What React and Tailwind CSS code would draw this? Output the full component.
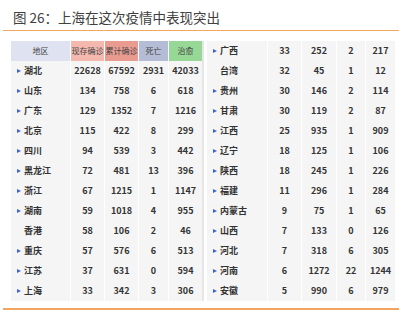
const LEFT = [
    ["湖北", 22628, 67592, 2931, 42033, true],
    ["山东", 134, 758, 6, 618, true],
    ["广东", 129, 1352, 7, 1216, true],
    ["北京", 115, 422, 8, 299, true],
    ["四川", 94, 539, 3, 442, true],
    ["黑龙江", 72, 481, 13, 396, true],
    ["浙江", 67, 1215, 1, 1147, true],
    ["湖南", 59, 1018, 4, 955, true],
    ["香港", 58, 106, 2, 46, false],
    ["重庆", 57, 576, 6, 513, true],
    ["江苏", 37, 631, 0, 594, true],
    ["上海", 33, 342, 3, 306, true],
];

const RIGHT = [
    ["广西", 33, 252, 2, 217, true],
    ["台湾", 32, 45, 1, 12, false],
    ["贵州", 30, 146, 2, 114, true],
    ["甘肃", 30, 119, 2, 87, true],
    ["江西", 25, 935, 1, 909, true],
    ["辽宁", 18, 125, 1, 106, true],
    ["陕西", 18, 245, 1, 226, true],
    ["福建", 11, 296, 1, 284, true],
    ["内蒙古", 9, 75, 1, 65, true],
    ["山西", 7, 133, 0, 126, true],
    ["河北", 7, 318, 6, 305, true],
    ["河南", 6, 1272, 22, 1244, true],
    ["安徽", 5, 990, 6, 979, true],
];

const HEAD = [
    { label: "地区", cls: "w-[60px] bg-[#dfe3f1]" },
    { label: "现存确诊", cls: "w-[34px] bg-[#f4b8af]" },
    { label: "累计确诊", cls: "w-[34px] bg-[#e99b90]" },
    { label: "死亡", cls: "w-[30px] bg-[#b4bdd5]" },
    { label: "治愈", cls: "w-[33px] bg-[#97d897]" },
];

function Row({ row, widths }) {
    const [name, a, b, c, d, mark] = row;
    return (
        <div className="flex h-[20px] items-center text-[9px] font-semibold text-[#333]">
            <div className={`${widths[0]} h-full flex items-center pl-[6px] border-r border-white`}>
                {mark ? (
                    <span className="w-0 h-0 border-y-[2.5px] border-y-transparent border-l-[4px] border-l-[#3c62d8] mr-[3px]" />
                ) : (
                    <span className="w-[7px]" />
                )}
                <span>{name}</span>
            </div>
            {[a, b, c, d].map((v, i) => (
                <div key={i} className={`${widths[i + 1]} h-full flex items-center justify-center ${i < 3 ? "border-r border-white" : ""}`}>
                    {v}
                </div>
            ))}
        </div>
    );
}

export default function App() {
    const leftW = ["w-[60px]", "w-[34px]", "w-[34px]", "w-[30px]", "w-[33px]"];
    const rightW = ["w-[61px]", "w-[34px]", "w-[35px]", "w-[29px]", "w-[29px]"];

    return (
        <div className="w-[402px] h-[326px] bg-white relative" style={{ fontFamily: '"Noto Sans CJK SC", "Noto Sans", sans-serif' }}>
            {/* Title */}
            <div className="pl-[13px] pt-[7px] h-[30px] text-[13.5px] text-[#404040] leading-[20px] whitespace-nowrap">
                图 26：上海在这次疫情中表现突出
            </div>
            <div className="mx-[3px] h-[1px] bg-[#f3a562]" />

            {/* Tables */}
            <div className="flex pt-[10px] pl-[11px]">
                <div className="bg-[#f5f5f5] border-r-2 border-[#e6e6e6]">
                    <div className="flex h-[20px] text-[8px] text-[#444] whitespace-nowrap">
                        {HEAD.map((h) => (
                            <div key={h.label} className={`${h.cls} flex items-center justify-center border-r border-white last:border-r-0`}>
                                {h.label}
                            </div>
                        ))}
                    </div>
                    {LEFT.map((r) => (
                        <Row key={r[0]} row={r} widths={leftW} />
                    ))}
                </div>
                <div className="ml-[3px] bg-[#f5f5f5]">
                    {RIGHT.map((r) => (
                        <Row key={r[0]} row={r} widths={rightW} />
                    ))}
                </div>
            </div>

            <div className="mx-[3px] mt-[7px] h-[2px] bg-[#f3a562]" />
        </div>
    );
}
